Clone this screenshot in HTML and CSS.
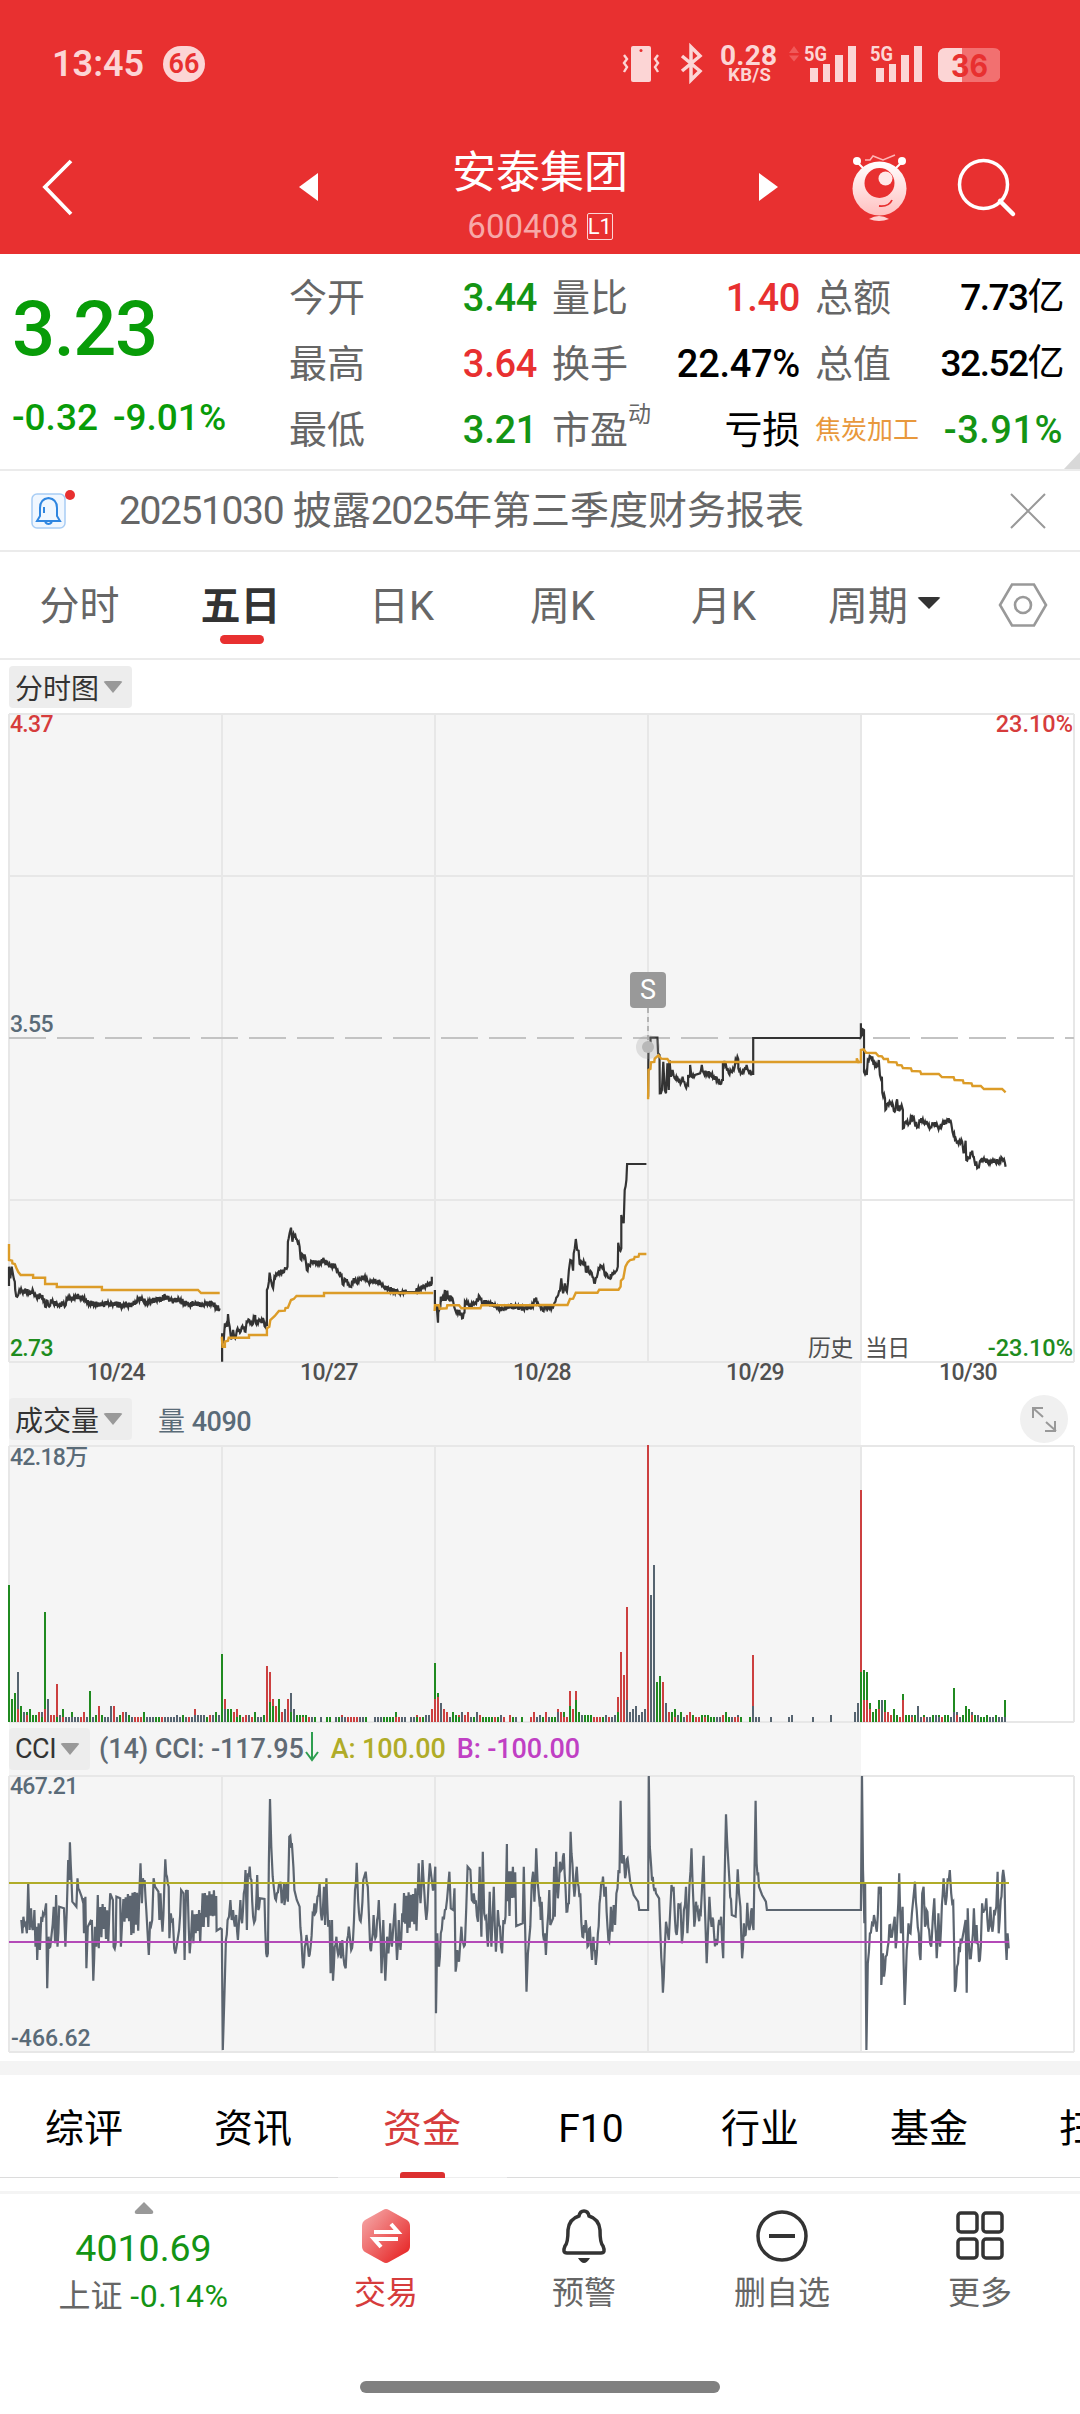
FILE: index.html
```html
<!DOCTYPE html>
<html lang="zh-CN">
<head>
    <meta charset="utf-8">
    <title>安泰集团 600408</title>
    <link rel="stylesheet" href="styles.css">
</head>
<body>
    <header>
        <div class="status-bar">
            <div class="status-left">
                <span class="clock">13:45</span>
                <span class="badge">66</span>
            </div>
            <svg class="status-icons" width="400" height="60" viewBox="600 36 400 60">
                <g fill="#fcd5d5">
                    <path d="M633 46h16q2 0 2 2v32q0 2-2 2h-16q-2 0-2-2v-32q0-2 2-2z"/>
                    <circle cx="641" cy="50.500" r="1.500" fill="#e83030"/>
                    <path d="M624 55l3 4-3 4 3 4-3 5M658 55l-3 4 3 4-3 4 3 5" fill="none" stroke="#fcd5d5" stroke-width="2.400"/>
                    <path d="M682 56l18 15-9 9v-33l9 9-18 15" fill="none" stroke="#fcd5d5" stroke-width="3.500"/>
                    <text x="720" y="65" class="st-speed" textLength="57">0.28</text>
                    <text x="728" y="81" class="st-unit" textLength="43">KB/S</text>
                    <path d="M789 53l5-7 5 7zM789 55.500l5 6 5-6z" fill="#f05a5a"/>
                    <text x="804" y="61" class="st-net" textLength="23" lengthAdjust="spacingAndGlyphs">5G</text>
                    <path d="M810 68h8v14h-8zM823 64h7v18h-7zM835 55h8v27h-8zM848 46h8v36h-8z"/>
                    <text x="870" y="61" class="st-net" textLength="23" lengthAdjust="spacingAndGlyphs">5G</text>
                    <path d="M876 68h8v14h-8zM889 64h7v18h-7zM901 55h8v27h-8zM914 46h8v36h-8z"/>
                    <path d="M946 48h47q8 0 8 8v2q3 1 3 7t-3 7q0 10-8 10h-47q-8 0-8-8v-18q0-8 8-8z" fill="#f27070"/>
                    <path d="M962 48h-16q-8 0-8 8v18q0 8 8 8h16z"/>
                </g>
                <text x="951" y="77" class="st-battery" textLength="37" lengthAdjust="spacingAndGlyphs">36</text>
            </svg>
        </div>

        <div class="title-bar">
            <svg class="back" width="110" height="70" viewBox="0 152 110 70">
                <path d="M71 161l-26 26 26 27" fill="none" stroke="#fff" stroke-width="3.800"/>
            </svg>
            <svg class="step prev" width="20" height="30" viewBox="0 0 20 30"><path d="M19 1v28l-19-14z" fill="#fff"/></svg>
            <div class="title">
                <h1>安泰集团</h1>
                <div class="code">600408<span class="level">L1</span></div>
            </div>
            <svg class="step" width="20" height="30" viewBox="0 0 20 30"><path d="M0 1v28l19-14z" fill="#fff"/></svg>
            <svg class="header-icons" width="230" height="80" viewBox="840 148 230 80">
                <defs>
                    <linearGradient id="face" x1="0" y1="0" x2="0" y2="1">
                        <stop offset="0" stop-color="#fff"/>
                        <stop offset="1" stop-color="#ffc0c0"/>
                    </linearGradient>
                </defs>
                <path d="M857 162l9 9M902 162l-9 9" stroke="#fff" stroke-width="2"/>
                <circle cx="857" cy="161" r="4" fill="#fff"/>
                <circle cx="902" cy="161" r="4" fill="#fff"/>
                <path d="M865 160l5 0 3-4 10 4 12-5" fill="none" stroke="#ffb4b4" stroke-width="1.500"/>
                <circle cx="879.500" cy="188.500" r="27" fill="url(#face)"/>
                <circle cx="879.500" cy="183" r="15" fill="#e83030"/>
                <circle cx="885.500" cy="178.500" r="7" fill="#ffe8e8"/>
                <path d="M879 206q10 1 13-6" fill="none" stroke="#e83030" stroke-width="1.800"/>
                <path d="M869 219q10-6 20 0q-10 4-20 0z" fill="#ffd0d0"/>
                <circle cx="983.500" cy="184.500" r="24" fill="none" stroke="#fff" stroke-width="3.500"/>
                <path d="M1000 201l13 13" stroke="#fff" stroke-width="4.500" stroke-linecap="round"/>
            </svg>
        </div>
    </header>

    <section class="quote">
        <div class="quote-main">
            <div class="price">3.23</div>
            <div class="change"><span>-0.32</span><span>-9.01%</span></div>
        </div>
        <div class="quote-grid">
            <div class="cell"><span>今开</span><b class="down">3.44</b></div>
            <div class="cell"><span>量比</span><b class="up">1.40</b></div>
            <div class="cell"><span>总额</span><b class="amount">7.73<i>亿</i></b></div>
            <div class="cell"><span>最高</span><b class="up">3.64</b></div>
            <div class="cell"><span>换手</span><b>22.47%</b></div>
            <div class="cell"><span>总值</span><b class="amount">32.52<i>亿</i></b></div>
            <div class="cell"><span>最低</span><b class="down">3.21</b></div>
            <div class="cell"><span>市盈<small>动</small></span><b><i>亏损</i></b></div>
            <div class="cell"><span class="industry">焦炭加工</span><b class="down percent">-3.91%</b></div>
        </div>
        <div class="corner"></div>
    </section>

    <section class="notice">
        <svg class="notice-bell" width="50" height="44" viewBox="0 0 50 44">
            <rect x="2" y="7" width="33" height="34" rx="5" fill="#f0f7ff" stroke="#a8cdf5" stroke-width="1.500"/>
            <path d="M18.500 11q-8.500 1-8.500 10v8l-3 5h23l-3-5v-8q0-9-8.500-10zM14 20v6M15 35q3.500 4 7 0" fill="none" stroke="#2f86e0" stroke-width="2"/>
            <circle cx="40" cy="8" r="5" fill="#e83030"/>
        </svg>
        <p><span>20251030</span> 披露<span>2025</span>年第三季度财务报表</p>
        <svg width="36" height="36" viewBox="0 0 36 36"><path d="M1 1l34 34M35 1L1 35" stroke="#999" stroke-width="2"/></svg>
    </section>

    <nav class="period-tabs">
        <a>分时</a>
        <a class="active">五日</a>
        <a>日K</a>
        <a>周K</a>
        <a>月K</a>
        <a>周期<i class="caret dark"></i></a>
        <svg width="50" height="46" viewBox="0 0 50 46">
            <path d="M14 2.500h22l12 20.500-12 20.500h-22l-12-20.500z" fill="none" stroke="#999" stroke-width="2.600"/>
            <circle cx="25" cy="23" r="8" fill="none" stroke="#999" stroke-width="2.600"/>
        </svg>
    </nav>

    <main class="charts">
        <div class="chart-bar">
            <span class="tag">分时图<i class="caret"></i></span>
        </div>
        <svg class="chart" width="1080" height="678" viewBox="0 714 1080 678">
            <rect x="9" y="714" width="852" height="678" class="history"/>
            <path class="grid" d="M9 714H1074M9 876H1074M9 1200H1074M9 1362H1074M9 714V1362M222 714V1362M435 714V1362M648 714V1362M861 714V1362M1074 714V1362"/>
            <path d="M9 1038H1074" class="middle"/>
            <text x="10" y="732" class="axis red">4.37</text>
            <text x="1073" y="732" class="axis red end">23.10%</text>
            <text x="10" y="1032" class="axis">3.55</text>
            <text x="10" y="1356" class="axis green">2.73</text>
            <text x="1073" y="1356" class="axis green end">-23.10%</text>
            <text x="808" y="1356" class="axis day">历史</text>
            <text x="865" y="1356" class="axis day">当日</text>
            <text x="116" y="1380" class="axis date">10/24</text>
            <text x="329" y="1380" class="axis date">10/27</text>
            <text x="542" y="1380" class="axis date">10/28</text>
            <text x="755" y="1380" class="axis date">10/29</text>
            <text x="968" y="1380" class="axis date">10/30</text>
            <g id="price"></g>
            <path d="M648 1008V1040" stroke="#b4b4b4" stroke-width="2" stroke-dasharray="5 4"/>
            <circle cx="648" cy="1047" r="12" fill="#999" fill-opacity="0.250"/>
            <circle cx="648" cy="1047" r="6" fill="#b8b8b8"/>
            <rect x="630" y="972" width="36" height="36" rx="4" fill="#999"/>
            <text x="648" y="999" class="sell">S</text>
        </svg>

        <div class="chart-bar shaded">
            <span class="tag">成交量<i class="caret"></i></span>
            <span class="volume-value">量 <b>4090</b></span>
            <svg class="expand" width="48" height="48" viewBox="0 0 48 48">
                <circle cx="24" cy="24" r="24" fill="#f0f0f0"/>
                <path d="M13 23v-10h10M13 13l10 9M35 26v10h-10M36 36l-10-9" fill="none" stroke="#999" stroke-width="2"/>
            </svg>
        </div>
        <svg class="chart" width="1080" height="276" viewBox="0 1446 1080 276">
            <rect x="9" y="1446" width="852" height="276" class="history"/>
            <path class="grid" d="M9 1446H1074M9 1722H1074M9 1446V1722M222 1446V1722M435 1446V1722M648 1446V1722M861 1446V1722M1074 1446V1722"/>
            <text x="10" y="1465" class="axis">42.18万</text>
            <g id="volume" shape-rendering="crispEdges"></g>
        </svg>

        <div class="chart-bar shaded">
            <span class="tag cci">CCI<i class="caret"></i></span>
            <span class="legend">(14) CCI: -117.95</span>
            <svg class="arrow" width="14" height="30" viewBox="0 0 14 30"><path d="M7 0v28M1 20l6 8 6-8" fill="none" stroke="#2e9e50" stroke-width="2"/></svg>
            <span class="legend line-a">A: 100.00</span>
            <span class="legend line-b">B: -100.00</span>
        </div>
        <svg class="chart" width="1080" height="277" viewBox="0 1776 1080 277">
            <rect x="9" y="1776" width="852" height="276" class="history"/>
            <path class="grid" d="M9 1776H1074M9 2052H1074M9 1776V2052M222 1776V2052M435 1776V2052M648 1776V2052M861 1776V2052M1074 1776V2052"/>
            <g id="cci"></g>
            <path d="M9 1883H1009" stroke="#b0ac28" stroke-width="2"/>
            <path d="M9 1942H1009" stroke="#b44ab8" stroke-width="2"/>
            <text x="10" y="1794" class="axis">467.21</text>
            <text x="11" y="2046" class="axis low">-466.62</text>
        </svg>
    </main>

    <nav class="info-tabs">
        <a>综评</a>
        <a>资讯</a>
        <a class="active">资金</a>
        <a>F10</a>
        <a>行业</a>
        <a>基金</a>
        <a>扫雷</a>
    </nav>

    <footer>
        <div class="index">
            <svg width="20" height="12" viewBox="0 0 20 12"><path d="M10 0l9 9q1 3-2 3h-14q-3 0-2-3z" fill="#999"/></svg>
            <strong>4010.69</strong>
            <span>上证 <em>-0.14%</em></span>
        </div>
        <div class="action trade">
            <svg width="56" height="56" viewBox="0 0 56 56">
                <defs>
                    <linearGradient id="hex" x1="0" y1="0" x2="1" y2="1">
                        <stop offset="0.100" stop-color="#f4a0a0"/>
                        <stop offset="0.850" stop-color="#e83030"/>
                    </linearGradient>
                </defs>
                <path d="M25 2q3-2 6 0l18 10q3 2 3 6v20q0 4-3 6l-18 10q-3 2-6 0l-18-10q-3-2-3-6v-20q0-4 3-6z" fill="url(#hex)"/>
                <path d="M16 24h24l-7-8M40 31h-24l7 8" fill="none" stroke="#fff" stroke-width="4"/>
            </svg>
            <span>交易</span>
        </div>
        <div class="action">
            <svg width="56" height="56" viewBox="0 0 56 56" fill="none" stroke="#333" stroke-width="3.500">
                <path d="M28 3q-4 0-5 5q-10 3-11 14q0 13-3 16q-3 7 2 7h34q5 0 2-7q-3-3-3-16q-1-11-11-14q-1-5-5-5z"/>
                <path d="M22 50h12q-3 5-6 5t-6-5z" fill="#333" stroke="none"/>
            </svg>
            <span>预警</span>
        </div>
        <div class="action">
            <svg width="56" height="56" viewBox="0 0 56 56" fill="none" stroke="#333" stroke-width="3.500">
                <circle cx="28" cy="28" r="24"/>
                <path d="M15 28h26" stroke-width="4"/>
            </svg>
            <span>删自选</span>
        </div>
        <div class="action">
            <svg width="56" height="56" viewBox="0 0 56 56" fill="none" stroke="#333" stroke-width="3.500">
                <rect x="6" y="5" width="19" height="19" rx="3"/>
                <rect x="31" y="5" width="19" height="19" rx="3"/>
                <rect x="6" y="31" width="19" height="19" rx="3"/>
                <rect x="31" y="31" width="19" height="19" rx="3"/>
            </svg>
            <span>更多</span>
        </div>
    </footer>
    <div class="home-indicator"></div>

    <script src="charts.js"></script>
</body>
</html>
```
FILE: styles.css
```css
* {
    box-sizing: border-box;
}

body {
    margin: 0;
    width: 1080px;
    height: 2414px;
    overflow: hidden;
    background: #fff;
    color: #000;
    font-family: Roboto, "Noto Sans CJK SC", sans-serif;
}

header {
    height: 254px;
    background: #e83030;
    color: #fff;
}

.status-bar {
    height: 96px;
    padding: 36px 80px 0 52px;
    display: flex;
    justify-content: space-between;
}

.status-left {
    display: flex;
    align-items: center;
    height: 56px;
    color: #fcd5d5;
}

.clock {
    width: 111px;
    font-size: 36px;
    font-weight: 600;
}

.badge {
    width: 42px;
    height: 36px;
    border-radius: 18px;
    background: #fcd5d5;
    color: #e83030;
    font-size: 27px;
    font-weight: 600;
    line-height: 37px;
    text-align: center;
}

.st-speed {
    font-size: 28px;
    font-weight: 700;
}

.st-unit {
    font-size: 18.500px;
    font-weight: 700;
}

.st-net {
    font-size: 21px;
    font-weight: 700;
}

.st-battery {
    font-family: Inter, Roboto, sans-serif;
    font-size: 31px;
    font-weight: 700;
    fill: #e83030;
}

.title-bar {
    display: grid;
    grid-template-columns: 110px 209px 440px 81px 240px;
    height: 158px;
    padding-top: 46px;
}

.back {
    margin-top: 10px;
}

.step {
    margin-top: 30px;
}

.prev {
    justify-self: end;
}

.header-icons {
    margin-top: 6px;
}

.title {
    padding-left: 2px;
    text-align: center;
}

h1 {
    margin: 0;
    font-size: 44px;
    font-weight: 400;
    line-height: 62px;
}

.code {
    display: flex;
    justify-content: center;
    align-items: center;
    height: 40px;
    margin-top: 2px;
    font-size: 33px;
    color: #f7a8a8;
}

.level {
    width: 26px;
    height: 27px;
    margin-left: 8px;
    border: 1px solid #fcd5d5;
    border-radius: 2px;
    color: #fff;
    font-size: 22px;
    line-height: 26px;
}

.up {
    color: #e83030 !important;
}

.down {
    color: #149414 !important;
}

.quote {
    position: relative;
    display: flex;
    height: 217px;
    border-bottom: 2px solid #ebebeb;
}

.quote-main {
    width: 289px;
    padding-left: 12px;
    color: #089c08;
}

.price {
    margin-top: 30px;
    font-size: 76px;
    font-weight: 500;
    line-height: 90px;
    letter-spacing: -1.500px;
}

.change {
    display: flex;
    gap: 15px;
    margin-top: 20px;
    font-size: 37px;
    font-weight: 500;
    line-height: 48px;
}

.quote-grid {
    display: grid;
    grid-template-columns: 248px 248px 248px;
    grid-auto-rows: 66px;
    column-gap: 15px;
    padding-top: 11px;
}

.cell {
    display: flex;
    justify-content: space-between;
    align-items: center;
    font-size: 38px;
    line-height: 50px;
    color: #666;
}

.cell b {
    font-weight: 500;
    letter-spacing: -0.300px;
    color: #000;
}

.cell b i {
    font-style: normal;
    font-weight: 400;
}

.cell .amount {
    font-size: 37px;
    letter-spacing: -1.500px;
}

.cell .percent {
    letter-spacing: 0.500px;
}

.cell small {
    font-size: 23px;
    vertical-align: 21px;
    line-height: 20px;
}

.cell .industry {
    font-size: 26px;
    color: #e8983c;
}

.corner {
    position: absolute;
    right: 0;
    bottom: 0;
    border-left: 16px solid transparent;
    border-bottom: 17px solid #d8d8d8;
}

.notice {
    display: flex;
    align-items: center;
    height: 81px;
    padding: 0 34px 0 30px;
    border-bottom: 2px solid #ebebeb;
}

.notice-bell {
    margin-top: -4px;
}

.notice p {
    flex: 1;
    margin: 0 0 0 39px;
    font-size: 39px;
    line-height: 50px;
    color: #666;
}

.notice p span {
    letter-spacing: -1.400px;
}

.period-tabs {
    display: grid;
    grid-template-columns: repeat(6, 161px) 114px;
    align-items: center;
    justify-items: center;
    height: 108px;
    border-bottom: 2px solid #ebebeb;
    color: #666;
    font-size: 40px;
}

.period-tabs a {
    display: flex;
    align-items: center;
    height: 80px;
    margin: -4px 2px 0 0;
}

.period-tabs .active {
    position: relative;
    color: #333;
    font-weight: 700;
}

.period-tabs .active::after {
    content: "";
    position: absolute;
    left: 50%;
    bottom: -1px;
    width: 44px;
    height: 9px;
    margin-left: -21px;
    border-radius: 5px;
    background: #e83030;
}

.caret {
    border: 10px solid transparent;
    border-top: 12px solid #999;
    border-bottom: 0;
    border-radius: 3px;
    margin-left: 4px;
}

.caret.dark {
    border-width: 12px 12px 0;
    border-top-color: #333;
    margin-left: 9px;
}

.chart {
    display: block;
    overflow: visible;
}

.chart-bar {
    display: flex;
    align-items: center;
    height: 54px;
    padding-left: 9px;
}

.shaded {
    background: linear-gradient(#f5f5f5, #f5f5f5) 9px 0 / 852px 100% no-repeat;
}

.tag {
    display: flex;
    align-items: center;
    width: 123px;
    height: 42px;
    padding-left: 6px;
    border-radius: 4px;
    background: #ededed;
    color: #333;
    font-size: 28px;
}

.tag.cci {
    width: 81px;
    font-size: 27px;
    letter-spacing: -0.500px;
}

.volume-value {
    margin-left: 26px;
    color: #5a6b78;
    font-size: 27px;
}

.volume-value b {
    font-weight: 500;
    letter-spacing: -0.500px;
}

.expand {
    margin-left: auto;
    margin-right: 12px;
}

.legend {
    margin-left: 9px;
    font-size: 27px;
    font-weight: 500;
    letter-spacing: -0.100px;
    color: #606a74;
}

.arrow {
    margin: -4px 0 0 1px;
}

.line-a {
    margin-left: 12px;
    color: #b0ac28;
}

.line-b {
    margin-left: 11px;
    color: #c040c4;
}

.history {
    fill: #f5f5f5;
}

.grid {
    fill: none;
    stroke: #e7e7e7;
    stroke-width: 2;
}

.middle {
    stroke: #c3c3c3;
    stroke-width: 2;
    stroke-dasharray: 37 11;
}

.axis {
    fill: #5a6b78;
    font-size: 23px;
    font-weight: 500;
    letter-spacing: -0.700px;
}

.axis.low {
    letter-spacing: 0;
}

.axis.red {
    fill: #d63c3c;
}

.axis.green {
    fill: #1e8c1e;
}

.axis.end {
    font-size: 23.500px;
    letter-spacing: 0;
    text-anchor: end;
}

.axis.day,
.axis.date {
    fill: #505050;
}

.axis.day {
    font-weight: 400;
}

.axis.date {
    text-anchor: middle;
}

.sell {
    fill: #fff;
    font-size: 27px;
    text-anchor: middle;
}

.line {
    fill: none;
    stroke: #333;
    stroke-width: 2.200px;
}

.line.average {
    stroke: #dc9c28;
    stroke-width: 2.400px;
}

.line.index-line {
    stroke: #5c6570;
}

.info-tabs {
    display: grid;
    grid-template-columns: repeat(7, 169px);
    width: 1080px;
    height: 133px;
    margin-top: 8px;
    overflow: hidden;
    border-top: 14px solid #f4f4f4;
    border-bottom: 3px solid #f4f4f4;
    font-size: 39px;
}

.info-tabs a {
    display: flex;
    justify-content: center;
    height: 103px;
    padding: 24px 1px 0 0;
    line-height: 60px;
    border-bottom: 1px solid #dcdcdc;
}

.info-tabs .active {
    position: relative;
    border-color: #eee;
    color: #d63c3c;
}

.info-tabs .active::after {
    content: "";
    position: absolute;
    left: 62px;
    bottom: -1px;
    width: 45px;
    height: 6px;
    border-radius: 3px 3px 0 0;
    background: #dc3030;
}

footer {
    display: grid;
    grid-template-columns: 287px repeat(4, 198px);
    height: 187px;
    color: #666;
    font-size: 32px;
}

.index {
    display: flex;
    flex-direction: column;
    align-items: center;
    padding-top: 8px;
}

.index strong {
    margin-top: 12px;
    color: #149414;
    font-size: 37.500px;
    font-weight: 400;
    line-height: 44px;
}

.index span {
    line-height: 52px;
}

.index em {
    font-style: normal;
    letter-spacing: 0.600px;
    color: #149414;
}

.action {
    display: flex;
    flex-direction: column;
    align-items: center;
    padding-top: 14px;
}

.action span {
    margin-top: 4px;
    line-height: 50px;
}

.trade {
    color: #d63c3c;
}

.home-indicator {
    width: 360px;
    height: 12px;
    margin: 0 auto;
    border-radius: 6px;
    background: #808080;
}
```
FILE: charts.js
```js
// Data grid is finer than the screen: 2.904 units per px across, 3 per px down
var UX = 2.904;
var UY = 3;
var COLORS = { g: "#208a20", r: "#cc4040", s: "#566470" };

var seed = 7;
function rand() {
    seed = (seed * 16807) % 2147483647;
    return seed / 2147483647;
}

function drawLine(target, data, left, top, cls, noise, maxGap) {
    var n = data.trim().split(/\s+/);
    var out = [];
    var px, py;
    for (var i = 0; i < n.length; i++) {
        var pair = n[i].split(",");
        var x = parseFloat(pair[0]);
        var y = parseFloat(pair[1]);
        // add ticks between two readings, but leave flat and smooth stretches
        if (i > 0 && noise && x - px >= 4 && x - px <= maxGap) {
            var steps = Math.floor((x - px) / 2.2);
            for (var k = 1; k < steps; k++) {
                var dir = k % 2 ? 1 : -1;
                var mx = px + (x - px) * k / steps;
                var my = py + (y - py) * k / steps + dir * noise * (0.3 + rand() * 0.7);
                out.push((left + mx / UX).toFixed(1) + "," + (top + my / UY).toFixed(1));
            }
        }
        out.push((left + x / UX).toFixed(1) + "," + (top + y / UY).toFixed(1));
        px = x;
        py = y;
    }
    var line = document.createElementNS("http://www.w3.org/2000/svg", "polyline");
    line.setAttribute("points", out.join(" "));
    line.setAttribute("class", "line " + cls);
    document.getElementById(target).appendChild(line);
}

// dense zigzag between two levels
function zigzag(from, to, hi, lo) {
    var out = [];
    for (var x = from, i = 0; x < to; x += 3.3, i++) {
        var y = i % 2 ? hi + rand() * 25 : lo - rand() * 60;
        out.push(x.toFixed(1) + "," + y.toFixed(0));
    }
    return " " + out.join(" ") + " ";
}

// price, one line per day
drawLine("price", "26,978 26,920 30,955 34,920 38,945 43,965 44,990 50,1010 56,990 64,995 75,993 85,997 97,995 105,1010 118,1008 128,1015 131,1040 138,1022 143,1040 148,1018 155,1030 170,1035 185,1028 191,1035 193,1015 205,1016 222,1010 240,1012 250,1020 260,1030 275,1032 300,1033 325,1030 350,1036 370,1035 395,1030 402,1016 415,1022 425,1028 440,1022 460,1020 480,1010 500,1022 520,1018 535,1030 550,1034 570,1030 590,1035 605,1030 618,1030 628,1042 638,1045", 0, 960, "", 9, 28);
drawLine("price", "645,1205 645,1120 649,1150 653,1090 660,1100 662,1062 667,1100 671,1138 677,1110 683,1135 690,1105 697,1118 704,1098 713,1115 716,1085 724,1080 732,1095 741,1065 742,1088 755,1082 766,1082 768,1098 775,1098 775,990 781,965 783,938 788,965 793,985 797,950 806,940 815,935 822,938 830,925 835,920 836,845 841,820 845,803 849,845 853,822 862,838 870,860 873,897 880,885 887,893 891,930 898,915 906,905 920,908 930,908 941,900 952,912 962,915 975,920 983,940 992,945 995,973 1003,958 1012,970 1018,980 1027,955 1035,968 1046,958 1060,948 1070,965 1080,962 1095,966 1106,970 1114,982 1130,988 1145,992 1160,998 1180,996 1205,996 1220,985 1232,978 1245,972 1254,970 1254,950", 0, 960, "", 8, 20);
drawLine("price", "1263,990 1263,1030 1268,1035 1272,1088 1273,1040 1279,1040 1280,1010 1288,1022 1292,990 1294,1022 1299,992 1301,1015 1314,1015 1316,1025 1322,1050 1330,1062 1334,1050 1342,1075 1349,1058 1350,1025 1365,1035 1380,1028 1393,1010 1402,1030 1420,1028 1440,1040 1460,1048 1475,1038 1500,1040 1520,1045 1540,1040 1548,1040 1552,1015 1562,1028 1568,1035", 0, 960, "", 9, 26);
drawLine("price", "0,1095 8,1112 15,1098 25,1102 38,1102 42,1088 50,1070 58,1052 62,1015 67,1060 72,1030 78,1055 84,990 88,960 92,962 96,992 98,940 104,897 108,930 112,932 115,972 122,968 131,965 133,995 140,980 142,998 150,998 157,1028 165,1012 170,985 178,978 184,978 188,1005 195,1002 201,1015 210,1000 220,995 226,980 227,908 231,930 236,925 236,825 243,850 246,750 251,720 253,672 309,672", 540, 940, "", 7, 14);
drawLine("price", "314,470 315,310 321,305 321,293 341,293 343,340 347,345 348,460 354,450 358,365 362,450 366,460 370,370 374,450 376,360 380,410 385,390 391,415 400,415 408,432 414,410 422,438 430,435 430,405 436,408 436,375 440,410 450,405 465,400 470,375 475,398 485,400 495,402 505,410 515,418 524,432 531,420 531,365 540,375 548,400 555,395 563,390 568,358 576,358 576,385 585,398 595,385 600,375 606,395 617,402 619,402 619,294 930,294", 540, 940, "", 8, 14);
drawLine("price", "932,250 932,290 938,268 941,270 941,395 949,405 952,360 960,350 970,365 978,380 984,360 987,405 993,410 994,458 1002,475 1003,510 1010,490 1018,490 1025,495 1030,515 1037,478 1040,510 1050,495 1054,510 1054,565 1062,545 1072,550 1081,525 1088,548 1097,560 1107,535 1114,548 1125,552 1134,562 1142,550 1155,560 1166,560 1170,545 1178,550 1187,535 1194,550 1198,575 1207,595 1213,605 1226,605 1230,640 1236,602 1238,660 1246,655 1255,632 1262,665 1272,682 1280,660 1289,655 1300,668 1310,662 1322,665 1330,668 1342,655 1350,668 1352,680", 540, 940, "", 9, 14);

// average price
drawLine("price", "26,852 26,900 35,902 36,910 43,912 48,925 53,936 60,945 96,945 96,953 131,953 131,972 165,972 165,981 296,981 296,990 575,990 584,999 638,999", 0, 960, "average");
drawLine("price", "644,1130 646,1160 653,1160 653,1145 662,1142 664,1133 723,1133 723,1125 775,1125 775,1105 782,1100 785,1080 798,1068 810,1053 827,1052 829,1044 836,1043 845,1020 853,1017 861,1008 941,1008 941,999 1258,999", 0, 960, "average");
drawLine("price", "1262,1053 1263,1036 1275,1036 1277,1046 1297,1045 1299,1036 1333,1036 1340,1045 1395,1045 1398,1036 1568,1036", 0, 960, "average");
drawLine("price", "0,1095 80,1095 87,1077 96,1076 104,1058 167,1058 172,1049 228,1049 234,1040 235,1022 242,1015 248,980 255,967 262,960 273,958 275,951 286,950 288,942 309,942", 540, 940, "average");
drawLine("price", "314,478 315,390 321,386 322,367 332,366 333,356 344,346 352,356 370,357 376,366 928,366", 540, 940, "average");
drawLine("price", "920,365 920,355 924,366 932,366 932,330 940,328 947,338 975,339 983,348 993,349 998,357 1010,357 1012,366 1035,367 1038,375 1050,376 1054,384 1077,385 1080,393 1104,394 1107,402 1158,402 1167,411 1201,412 1204,420 1228,421 1230,429 1253,430 1256,438 1280,438 1289,447 1342,447 1352,457", 540, 940, "average");

// CCI(14)
drawLine("cci", "62,600 65,640 68,590 74,610 78,640 82,490 86,630 90,565 95,630 100,570 103,680 106,620 108,720 112,610 116,690 120,590 125,580 130,575 134,550 137,805 141,650 146,680 150,640 156,560 160,670 163,525 167,680 172,560" +
    " 186,565 190,680 194,570 198,420 201,480 203,367 208,490 210,545 222,560 225,475 230,510 237,530 242,535 244,640 248,530 251,745 255,620 262,605 267,600 271,782 276,620 280,680 284,525 287,685" +
    zigzag(288, 318, 550, 665) + "320,520 328,540 330,680 336,670 338,530 349,535 351,680" + zigzag(355, 405, 515, 645) +
    "408,430 412,550 415,475 420,480 425,570 432,705 436,605 442,600 446,475 450,500 460,515 463,600 466,520 472,635 477,500 480,418 485,470 490,500 492,655 496,580 502,600 506,685 512,685 520,630 526,510 533,520 536,720 540,510 545,510 548,620 551,700" +
    zigzag(555, 585, 565, 685) + zigzag(585, 628, 505, 645) +
    "629,632 640,625 644,628 647,990 651,850 656,660 661,600 665,590 669,540 673,600 677,570 682,620 686,585 691,660 698,540 703,610 708,520 713,450 717,630 720,460 725,440 730,480 735,590 741,600 747,465 750,570 755,535 768,537 773,700 778,700 781,420 784,237 788,380 792,470 796,510 799,535 804,520 810,495 815,485 818,550 825,490 826,555 832,490 836,545 840,350 843,347 848,375 852,440 855,510 862,540 870,560 875,650 880,745 885,680 890,645 893,670 897,710 902,680 908,580 913,550 918,575 922,530 928,490 932,580 937,580 941,500 944,615 948,475 953,620 957,600 960,760 964,600 967,782 972,680 977,650 982,705 988,665 990,715 994,660 1000,735 1004,745 1008,660 1013,620 1020,690 1025,660 1031,510 1036,428 1040,540 1045,600 1050,580 1055,480 1062,455 1068,500 1075,685 1080,660 1085,585 1090,655 1095,600 1100,540 1105,640 1108,760 1113,600 1119,782 1124,650 1128,700 1133,610 1138,680 1147,550 1153,720 1158,600 1163,690 1168,580" +
    zigzag(1170, 1212, 505, 650) +
    "1216,430 1221,550 1227,420 1232,510 1238,600 1244,500 1248,430 1255,490 1260,500 1264,440 1266,880 1270,640 1275,740 1280,640 1286,590 1292,570 1298,540 1305,455 1309,565 1316,570 1320,505 1323,755 1328,690 1333,725 1340,620 1345,670 1350,675 1354,560 1358,440 1366,450 1370,540 1376,520 1382,545 1388,605 1393,440 1398,650 1402,395 1406,580 1412,590 1417,680 1422,515 1427,680 1434,500 1440,695 1446,570 1452,620 1458,700 1462,600 1468,590 1472,372" +
    zigzag(1473, 1497, 440, 590) +
    "1499,618 1518,610 1521,440 1525,620 1529,815 1533,700 1540,620 1544,490 1548,455 1552,545 1557,385 1561,480 1568,560", 0, 1720, "index-line", 22, 6);
drawLine("cci", "0,530 2,600 5,545 9,645 14,640 17,705 21,625 27,510 30,615 38,595 41,440 43,590 47,395 52,535 58,425 62,450 69,400 74,500 77,575 84,550 89,335 94,430 100,530 107,440 112,500 117,520 123,650 128,615 135,620 138,680 145,625 151,720 155,650 162,735 168,640 175,530 178,485 183,470 187,530 191,500 196,620 201,665 206,560 210,635 214,555 218,615 222,520 228,450 231,460 234,242 238,430 243,405 247,475 254,415 262,485 272,525 285,545 288,570 314,570 316,168 319,380 323,440 330,500 337,520 346,535 350,650 357,818 362,690 366,605 374,660 382,495 388,500 392,600 397,645 402,550 408,555 412,670 418,570 424,500 428,640 434,500 440,385 446,560 448,620 453,545 460,590 467,580 475,407 480,600 484,730 492,530 496,600 503,600 506,650 513,675 520,600 526,590 532,715 536,480 540,283 546,410 550,480 557,585 568,590 574,448 578,520 582,560 587,715 592,610 597,645 602,548 608,630 615,565 620,630 626,242 629,430 636,500 645,525 656,545 659,570 932,570 935,168 938,450 942,610 944,490 948,990 952,730 958,640 964,610 970,585 978,635 984,500 990,500 991,795 996,700 999,770 1004,710 1010,680 1017,615 1022,650 1030,590 1033,685 1038,600 1043,460 1048,640 1053,560 1059,855 1065,690 1070,610 1076,640 1080,580 1089,485 1094,570 1100,640 1105,720 1110,520 1114,500 1118,620 1125,575 1130,630 1136,680 1141,590 1145,535 1152,715 1157,580 1162,680 1167,555 1172,475 1178,555 1184,475 1190,450 1194,520 1200,545 1203,700 1205,815 1211,740 1217,680 1224,670 1232,625 1236,600 1239,818 1242,565 1248,715 1254,680 1260,565 1264,670 1268,615 1275,725 1280,680 1284,550 1290,570 1296,535 1302,635 1308,560 1314,635 1319,570 1325,560 1329,455 1332,640 1338,540 1345,450 1349,480 1352,660 1355,720 1358,640 1361,685", 540, 1720, "index-line", 22, 7);

// volume bars, 71 per day: colour + height, a second pair is the bar in front
var volume = [
    "g137 g23 g29 s50/r13 g16 s10 g10/r7 g13 g7 g7 r10 s10/g5 g110/r13 s23 r7 r7 r38/g5 s7 g13/r5 s5 s5 g10/s5 s5 s5 r5 r10 s5 g31 s5 g7 r16 g7 s5 s5 s16 r16 s5 g7 r10 s10 g7 s5 r5 r5 r5 g10 s5 s5 s5 g5 g5 r5 s5 s5 s5 s5 s7 s5 g7 s5 r5 s5 r13/s7 s7 s7 s7 g5 r7 s7 g10 s7",
    "g68 r23/s13 g13 g13 r10 r13/g5 g7 r5 r7 s7 r5 g10 s5 s5 g7 r56 r50/g20 r23/g16 r16 g23 r10 s13 r23 s29/g10 s13 g7 g7 g7/r5 g7 r5 s5 g5 - s5 - g5 g5 - s5 g5 r7/s5 s5 r5 r5 r5 r5 s5 s5 g5 - - s5 s5 s5 g5 g5 g5 g5 g10/r5 r5 s5 s5 - s5 s5 r7/g5 r5 g5 s7 s7 r13",
    "g59/r23 g29/r25 s19 r13 r10 s5 g10 g7 r7/g5 s10 r7 r10 s5 g5 s10 r7 g5 g5 g5 g5 r5 g5 s7 r5 - r7 g5 s5 - g5 - - r5 r10 s5 s7 g5 r10 s5 g5 g5 r13/s10 r10 g10/r5 r5 r31/g16 r13 r31/g22 g10 s7 g7 g7 g7 r5 r5 r5 g5 s7 r5 s5 s7 r25/g10 r70 r47 r115/s22 s10 s13 s16 s7 s10 s13",
    "r277 s127 s157 g40 g46 r40 s19 r10 g10 g13/r5 s7 g10 s5 r7 r10 g7 r5 r5 g7 g7/r5 g7 g5 g5 s5 s5 r7 g10 g5 s5 r5 s7/r5 g5 - - g5 r67/s16 s5 s5 - - - s5 - - - - - s5 s7 - - - - - - s5 - - - - - s7 - - - - - - - s10 s19",
    "r232/g50 g52/r22 g50/r22 g19/r13 g10 g13 g22/r13 s22 g22/r10 r10 r7 g13 g7 r5 g28/r22 g7 g7 s7/r5 g7 s16 s5 g7/r5 s5 s5 g7 s7 g7/s5 r5 g7 g7 s5 g34/s10 s10/r7 s5 g7 g16 g13 s10/r7 g7 s7 g5 g5 g7 s5 s5 g7 s5 s5 g22/s5"
];

volume.forEach(function (bars, day) {
    bars.split(" ").forEach(function (bar, i) {
        if (bar === "-") return;
        bar.split("/").forEach(function (part) {
            var h = parseInt(part.slice(1));
            var rect = document.createElementNS("http://www.w3.org/2000/svg", "rect");
            rect.setAttribute("x", 8 + day * 213 + i * 3);
            rect.setAttribute("y", 1722 - h);
            rect.setAttribute("width", 2);
            rect.setAttribute("height", h);
            rect.setAttribute("fill", COLORS[part[0]]);
            document.getElementById("volume").appendChild(rect);
        });
    });
});
```
